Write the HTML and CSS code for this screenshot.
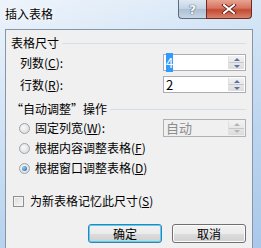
FILE: index.html
```html
<!DOCTYPE html>
<html lang="zh-CN">
<head>
    <meta charset="UTF-8">
    <title>插入表格</title>
    <link rel="stylesheet" href="styles.css">
</head>
<body>
    <div class="window">
        <div class="titlebar">
            <span class="title">插入表格</span>
            <div class="caption-buttons">
                <div class="cap-btn help-btn">?</div>
                <div class="cap-btn close-btn">
                    <svg width="16" height="10" viewBox="0 0 16 10">
                        <path d="M3 1 L13 9 M13 1 L3 9" stroke="#5a1a12" stroke-width="3.6" stroke-linecap="square"/>
                        <path d="M3 1 L13 9 M13 1 L3 9" stroke="#ffffff" stroke-width="2" stroke-linecap="square"/>
                    </svg>
                </div>
            </div>
        </div>

        <div class="client">
            <div class="group-title"><span>表格尺寸</span><div class="group-line"></div></div>

            <div class="field-row first">
                <span class="label">列数(<u>C</u>):</span>
                <div class="spin">
                    <div class="spin-value"><span class="selected">4</span></div>
                    <div class="spin-btns">
                        <div class="arrow up"></div>
                        <div class="arrow down"></div>
                    </div>
                </div>
            </div>
            <div class="field-row">
                <span class="label">行数(<u>R</u>):</span>
                <div class="spin">
                    <div class="spin-value">2</div>
                    <div class="spin-btns">
                        <div class="arrow up"></div>
                        <div class="arrow down"></div>
                    </div>
                </div>
            </div>

            <div class="group-title second"><span>“自动调整”操作</span><div class="group-line"></div></div>

            <div class="option-row first-opt">
                <span class="radio"></span>
                <span class="opt-label">固定列宽(<u>W</u>):</span>
                <div class="spin disabled">
                    <div class="spin-value">自动</div>
                    <div class="spin-btns">
                        <div class="arrow up"></div>
                        <div class="arrow down"></div>
                    </div>
                </div>
            </div>
            <div class="option-row">
                <span class="radio"></span>
                <span class="opt-label">根据内容调整表格(<u>F</u>)</span>
            </div>
            <div class="option-row">
                <span class="radio checked"></span>
                <span class="opt-label">根据窗口调整表格(<u>D</u>)</span>
            </div>

            <div class="check-row">
                <span class="checkbox"></span>
                <span class="opt-label">为新表格记忆此尺寸(<u>S</u>)</span>
            </div>

            <div class="button-row">
                <div class="btn default">确定</div>
                <div class="btn">取消</div>
            </div>
        </div>
    </div>
</body>
</html>
```

FILE: styles.css
```css
body {
    margin: 0;
    width: 261px;
    height: 248px;
    overflow: hidden;
    font-family: 'Noto Sans CJK SC', 'DejaVu Sans', sans-serif;
    font-size: 12px;
    color: #000;
}

.window {
    height: 248px;
    background: linear-gradient(160deg, #eef4fb 0%, #d6e6f6 30%, #bcd5ef 65%, #a9c8ea 100%);
    display: flex;
    flex-direction: column;
}

.titlebar {
    height: 29px;
    display: flex;
    align-items: flex-start;
    padding-left: 5px;
}

.title {
    margin-top: 7px;
    line-height: 14px;
    font-size: 12px;
    text-shadow: 0 0 6px #ffffff, 0 0 3px #ffffff;
}

.caption-buttons {
    margin-left: auto;
    margin-right: 9px;
    display: flex;
}

.cap-btn {
    height: 19px;
    box-sizing: border-box;
    border: 1px solid #5d6b7c;
    border-top: none;
    display: flex;
    align-items: center;
    justify-content: center;
}

.help-btn {
    width: 28px;
    border-radius: 0 0 0 4px;
    border-right: none;
    background: linear-gradient(#dfe8f2, #c2d2e3 50%, #aebfd3 51%, #c7d6e6);
    color: #f4f8fc;
    font-family: 'DejaVu Sans', sans-serif;
    font-weight: bold;
    font-size: 13px;
    text-shadow: 0 0 1px #3a4a5e, 0 0 1px #3a4a5e;
}

.close-btn {
    width: 46px;
    border-radius: 0 0 4px 0;
    border-color: #6e2b23;
    background: linear-gradient(#e8a493, #d7735e 45%, #c44a32 55%, #d8826a);
}

.client {
    flex: 1;
    margin: 0 8px 0 5px;
    border: 1px solid #8696aa;
    border-bottom: none;
    background: #f0f0f0;
    padding: 0 6px 0 5px;
}

.group-title {
    display: flex;
    align-items: center;
    margin-top: 6px;
    line-height: 14px;
    height: 14px;
}

.group-title.second {
    margin-top: 9px;
}

.group-line {
    flex: 1;
    height: 1px;
    background: #d5dfe5;
    margin-left: 3px;
    margin-top: 1px;
}

.field-row {
    display: flex;
    align-items: center;
    justify-content: space-between;
    padding-left: 9px;
    margin-top: 5px;
}

.field-row.first {
    margin-top: 4px;
}

.label,
.opt-label {
    line-height: 14px;
}

u {
    text-decoration: underline;
    text-underline-offset: 1px;
}

.spin {
    width: 83px;
    height: 17px;
    box-sizing: border-box;
    border: 1px solid #abadb3;
    background: #fff;
    display: flex;
    padding: 1px;
}

.spin-value {
    flex: 1;
    line-height: 14px;
    padding-left: 1px;
    font-size: 13px;
}

.selected {
    background: #3399ff;
    color: #fff;
}

.spin-btns {
    width: 15px;
    display: flex;
    flex-direction: column;
    background: linear-gradient(#f2f2f2, #dcdcdc);
    border-left: 1px solid #e0e0e0;
}

.arrow {
    flex: 1;
    display: flex;
    align-items: center;
    justify-content: center;
}

.arrow::after {
    content: '';
    border-left: 3px solid transparent;
    border-right: 3px solid transparent;
}

.arrow.up::after {
    border-bottom: 3px solid #5a74a8;
}

.arrow.down {
    border-top: 1px solid #c8c8c8;
}

.arrow.down::after {
    border-top: 3px solid #5a74a8;
}

.spin.disabled {
    background: #f0f0f0;
    border-color: #adb2b5;
    height: 18px;
}

.spin.disabled .spin-value {
    color: #8d8d8d;
}

.spin.disabled .arrow.up::after {
    border-bottom-color: #b4b4b4;
}

.spin.disabled .arrow.down::after {
    border-top-color: #b4b4b4;
}

.option-row {
    display: flex;
    align-items: center;
    padding-left: 8px;
    height: 20px;
}

.option-row.first-opt {
    margin-top: 2px;
}

.option-row .spin {
    margin-left: auto;
}

.radio {
    width: 11px;
    height: 11px;
    box-sizing: border-box;
    border-radius: 50%;
    border: 1px solid #9da3a9;
    background: radial-gradient(circle at 40% 40%, #fafafa, #d4d4d4);
    margin-right: 5px;
    display: flex;
    align-items: center;
    justify-content: center;
}

.radio.checked::after {
    content: '';
    width: 5px;
    height: 5px;
    border-radius: 50%;
    background: radial-gradient(circle at 35% 35%, #8fd1ff, #1c5d9c);
}

.check-row {
    display: flex;
    align-items: center;
    padding-left: 2px;
    margin-top: 16px;
}

.checkbox {
    width: 11px;
    height: 11px;
    box-sizing: border-box;
    border: 1px solid #8f8f8f;
    background: linear-gradient(135deg, #dcdcdc, #f6f6f6);
    box-shadow: inset 0 0 0 1px #f4f4f4;
    margin-right: 6px;
}

.button-row {
    display: flex;
    justify-content: flex-end;
    gap: 10px;
    margin-top: 16px;
}

.btn {
    width: 74px;
    height: 19px;
    box-sizing: border-box;
    border: 1px solid #707070;
    border-radius: 3px;
    background: linear-gradient(#f2f2f2 0%, #ebebeb 50%, #dddddd 51%, #cfcfcf 100%);
    display: flex;
    align-items: center;
    justify-content: center;
    line-height: 14px;
    box-shadow: inset 0 0 0 1px #fcfcfc;
}

.btn.default {
    border-color: #3c7fb1;
    box-shadow: inset 0 0 0 1px #48d5fb;
}
```
